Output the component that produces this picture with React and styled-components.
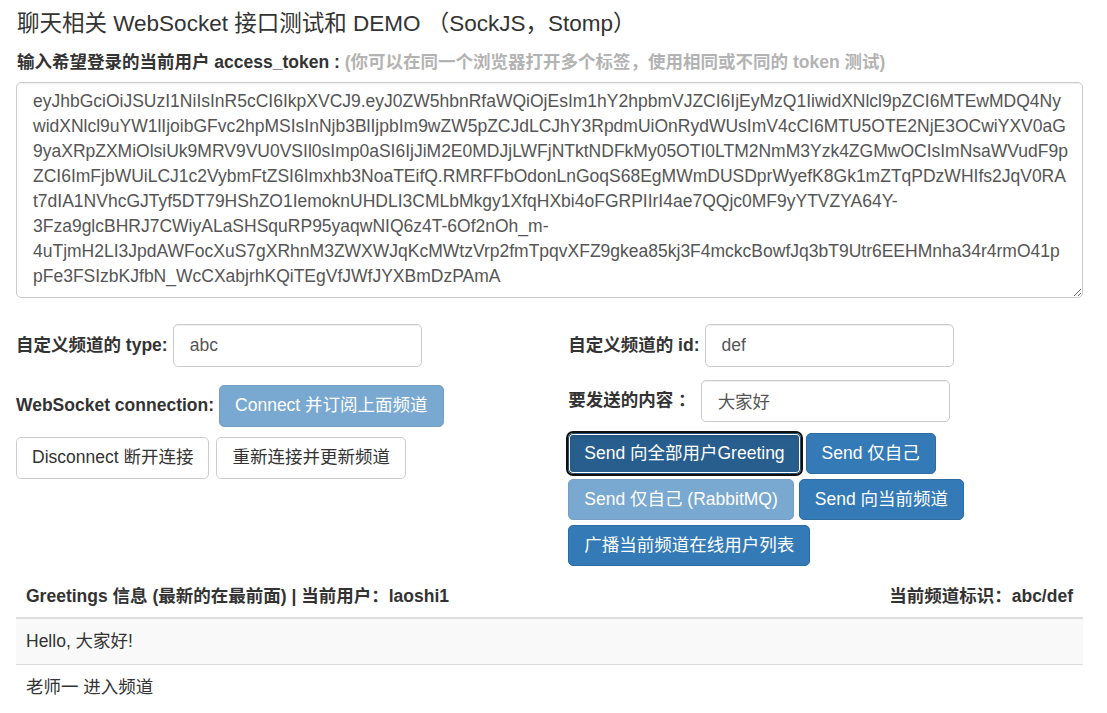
import styled, { createGlobalStyle } from 'styled-components';

const tokenLines = [
    'eyJhbGciOiJSUzI1NiIsInR5cCI6IkpXVCJ9.eyJ0ZW5hbnRfaWQiOjEsIm1hY2hpbmVJZCI6IjEyMzQ1IiwidXNlcl9pZCI6MTEwMDQ4Ny',
    'widXNlcl9uYW1lIjoibGFvc2hpMSIsInNjb3BlIjpbIm9wZW5pZCJdLCJhY3RpdmUiOnRydWUsImV4cCI6MTU5OTE2NjE3OCwiYXV0aG',
    '9yaXRpZXMiOlsiUk9MRV9VU0VSIl0sImp0aSI6IjJiM2E0MDJjLWFjNTktNDFkMy05OTI0LTM2NmM3Yzk4ZGMwOCIsImNsaWVudF9p',
    'ZCI6ImFjbWUiLCJ1c2VybmFtZSI6Imxhb3NoaTEifQ.RMRFFbOdonLnGoqS68EgMWmDUSDprWyefK8Gk1mZTqPDzWHIfs2JqV0RA',
    't7dIA1NVhcGJTyf5DT79HShZO1IemoknUHDLI3CMLbMkgy1XfqHXbi4oFGRPIIrI4ae7QQjc0MF9yYTVZYA64Y-',
    '3Fza9glcBHRJ7CWiyALaSHSquRP95yaqwNIQ6z4T-6Of2nOh_m-',
    '4uTjmH2LI3JpdAWFocXuS7gXRhnM3ZWXWJqKcMWtzVrp2fmTpqvXFZ9gkea85kj3F4mckcBowfJq3bT9Utr6EEHMnha34r4rmO41p',
    'pFe3FSIzbKJfbN_WcCXabjrhKQiTEgVfJWfJYXBmDzPAmA',
];

const greetings = ['Hello, 大家好!', '老师一 进入频道'];

const GlobalStyle = createGlobalStyle`
    body {
        margin: 0;
        background: #fff;
        color: #333;
        font-family: "Liberation Sans", "Noto Sans CJK SC", sans-serif;
        font-size: 17.5px;
        line-height: 25px;
    }
    * { box-sizing: border-box; }
`;

const Page = styled.div`
    padding: 8px 24px 0 16px;
`;
const Title = styled.div`
    font-size: 22.5px;
    line-height: 31px;
    padding-left: 1px;
`;
const TokenLabel = styled.div`
    font-weight: bold;
    margin-top: 11px;
    padding-left: 1px;
`;
const Hint = styled.span`
    color: #b3b3b3;
`;
const TokenArea = styled.textarea`
    display: block;
    width: 100%;
    height: 216px;
    margin-top: 7px;
    padding: 6px 16px 8px;
    border: 1px solid #ccc;
    border-radius: 5px;
    box-shadow: inset 0 1px 1px rgba(0, 0, 0, .075);
    color: #555;
    font: inherit;
    line-height: 25px;
    white-space: pre;
    overflow: hidden;
`;
const Columns = styled.div`
    display: grid;
    grid-template-columns: 1fr 1fr;
    column-gap: 37.5px;
    margin-top: 26px;
`;
const Column = styled.div`
    display: flex;
    flex-direction: column;
    align-items: flex-start;
`;
const FormRow = styled.div`
    display: flex;
    align-items: center;
    gap: 5px;
    margin-top: ${props => props.top || 0}px;
`;
const Label = styled.label`
    font-weight: bold;
`;
const Input = styled.input`
    width: 249px;
    height: 42.5px;
    padding: 7px 16px;
    border: 1px solid #ccc;
    border-radius: 5px;
    box-shadow: inset 0 1px 1px rgba(0, 0, 0, .075);
    color: #555;
    font: inherit;
`;
const Buttons = styled.div`
    display: flex;
    flex-wrap: wrap;
    gap: ${props => props.gap || 5}px;
    margin-top: ${props => props.top || 0}px;
`;
const Button = styled.button`
    height: ${props => props.h || 42}px;
    padding: 0 15px;
    border: 1px solid ${props => (props.primary ? '#2e6da4' : '#ccc')};
    border-radius: 5px;
    background: ${props => (props.primary ? '#337ab7' : '#fff')};
    color: ${props => (props.primary ? '#fff' : '#333')};
    font: inherit;
    white-space: nowrap;
    opacity: ${props => (props.disabled ? 0.65 : 1)};
    ${props => props.active && `
        background: #285e8e;
        border-color: #204d74;
        outline: 2px solid #111;
        box-shadow: inset 0 0 0 1px #fff, inset 0 3px 5px rgba(0, 0, 0, .125);
    `}
`;
const Table = styled.table`
    width: 100%;
    margin-top: 10px;
    border-collapse: collapse;
`;
const HeadCell = styled.th`
    padding: 8px 10px;
    text-align: left;
    border-bottom: 2px solid #ddd;
`;
const HeadInner = styled.div`
    display: flex;
    justify-content: space-between;
`;
const Cell = styled.td`
    padding: 10px;
    border-top: 1px solid #ddd;
    background: ${props => (props.striped ? '#f9f9f9' : 'transparent')};
`;

function App() {
    return (
        <Page>
            <GlobalStyle />
            <Title>聊天相关 WebSocket 接口测试和 DEMO （SockJS，Stomp）</Title>
            <TokenLabel>
                输入希望登录的当前用户 access_token : <Hint>(你可以在同一个浏览器打开多个标签，使用相同或不同的 token 测试)</Hint>
            </TokenLabel>
            <TokenArea readOnly value={tokenLines.join('\n')} />
            <Columns>
                <Column>
                    <FormRow>
                        <Label>自定义频道的 type:</Label>
                        <Input readOnly value="abc" />
                    </FormRow>
                    <FormRow top={18}>
                        <Label>WebSocket connection:</Label>
                        <Button primary disabled>Connect 并订阅上面频道</Button>
                    </FormRow>
                    <Buttons top={10} gap={7}>
                        <Button>Disconnect 断开连接</Button>
                        <Button>重新连接并更新频道</Button>
                    </Buttons>
                </Column>
                <Column>
                    <FormRow>
                        <Label>自定义频道的 id:</Label>
                        <Input readOnly value="def" />
                    </FormRow>
                    <FormRow top={13}>
                        <Label>要发送的内容 ：</Label>
                        <Input readOnly value="大家好" />
                    </FormRow>
                    <Buttons top={11}>
                        <Button primary active h={41}>Send 向全部用户Greeting</Button>
                        <Button primary h={41}>Send 仅自己</Button>
                        <Button primary disabled h={41}>Send 仅自己 (RabbitMQ)</Button>
                        <Button primary h={41}>Send 向当前频道</Button>
                        <Button primary h={41}>广播当前频道在线用户列表</Button>
                    </Buttons>
                </Column>
            </Columns>
            <Table>
                <thead>
                    <tr>
                        <HeadCell>
                            <HeadInner>
                                <span>Greetings 信息 (最新的在最前面) | 当前用户：laoshi1</span>
                                <span>当前频道标识：abc/def</span>
                            </HeadInner>
                        </HeadCell>
                    </tr>
                </thead>
                <tbody>
                    {greetings.map((msg, i) => (
                        <tr key={i}>
                            <Cell striped={i % 2 === 0}>{msg}</Cell>
                        </tr>
                    ))}
                </tbody>
            </Table>
        </Page>
    );
}

export default App;
